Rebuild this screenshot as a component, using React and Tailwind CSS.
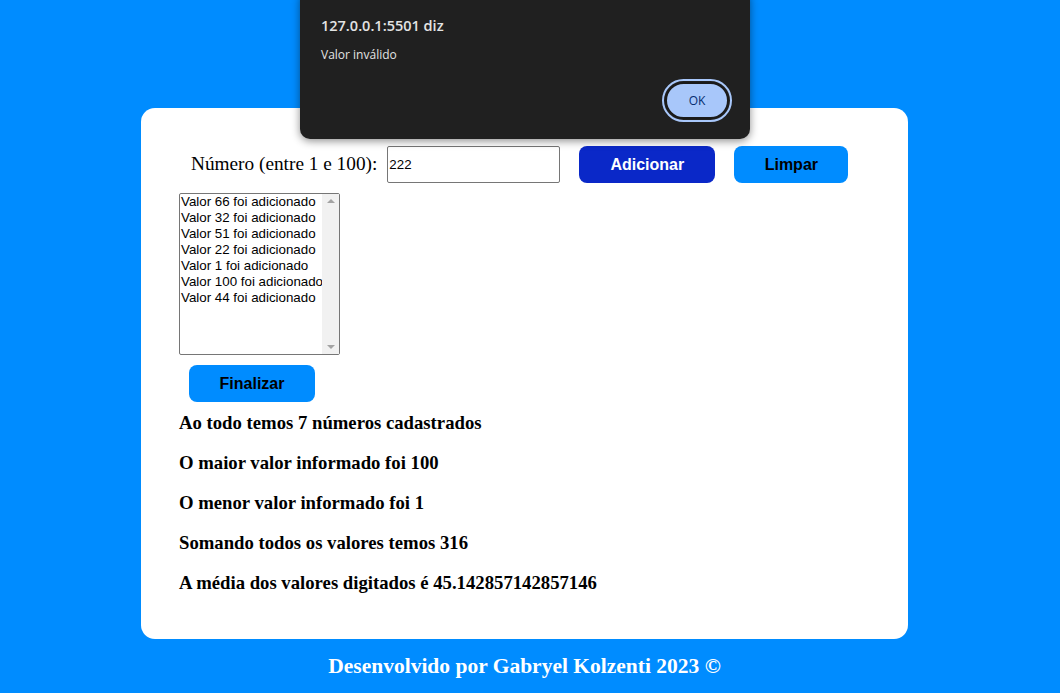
export default function App() {
  const items = [66, 32, 51, 22, 1, 100, 44];
  const sans = { fontFamily: '"Liberation Sans", Arial, sans-serif' };
  return (
    <div className="relative min-h-[693px] w-full bg-[#008cff] overflow-hidden" style={{ fontFamily: '"Liberation Serif", serif' }}>
      <div className="w-[1049px] pt-[108px] flex flex-col items-center">
        <div className="w-[767px] h-[531px] bg-white rounded-[14px] pl-[38px] pt-[38px]">
          <div className="flex items-center">
            <label className="ml-[12px] text-[19.3px] text-black">Número (entre 1 e 100):</label>
            <input
              defaultValue="222"
              className="ml-[10px] w-[173px] h-[37px] border border-[#767676] rounded-[2px] px-[1px] text-[13.33px] text-black outline-none"
              style={sans}
            />
            <button className="ml-[19px] w-[136px] h-[37px] rounded-[8px] bg-[#0a28c8] text-white font-bold text-[16px]" style={sans}>Adicionar</button>
            <button className="ml-[19px] w-[114px] h-[37px] rounded-[8px] bg-[#008cff] text-black font-bold text-[16px]" style={sans}>Limpar</button>
          </div>
          <div className="mt-[10px] w-[161px] h-[162px] border border-[#767676] rounded-[2px] flex" style={sans}>
            <div className="flex-1 pl-[1px] text-[13.33px] leading-[16px] text-black overflow-hidden">
              {items.map((v) => (
                <div key={v} className="whitespace-nowrap">Valor {v} foi adicionado</div>
              ))}
            </div>
            <div className="w-[17px] shrink-0 bg-[#f1f1f1] flex flex-col justify-between items-center py-[5px]">
              <div className="w-0 h-0 border-l-[4px] border-r-[4px] border-b-[4px] border-l-transparent border-r-transparent border-b-[#a3a3a3]" />
              <div className="w-0 h-0 border-l-[4px] border-r-[4px] border-t-[4px] border-l-transparent border-r-transparent border-t-[#a3a3a3]" />
            </div>
          </div>
          <button className="ml-[10px] mt-[10px] w-[126px] h-[37px] rounded-[8px] bg-[#008cff] text-black font-bold text-[16px]" style={sans}>Finalizar</button>
          <div className="mt-[10px] flex flex-col gap-[18px] text-[18.72px] font-bold text-black leading-[22px]">
            <p>Ao todo temos 7 números cadastrados</p>
            <p>O maior valor informado foi 100</p>
            <p>O menor valor informado foi 1</p>
            <p>Somando todos os valores temos 316</p>
            <p>A média dos valores digitados é 45.142857142857146</p>
          </div>
        </div>
        <p className="mt-[13px] text-white font-bold text-[21.5px] leading-[28px]">Desenvolvido por Gabryel Kolzenti 2023 ©</p>
      </div>

      <div
        className="absolute left-[300px] top-[-10px] w-[450px] h-[149px] bg-[#202020] rounded-[10px] shadow-[0_2px_8px_rgba(0,0,0,0.45)] pl-[21px] pt-[26px]"
        style={{ fontFamily: '"Open Sans", "Noto Sans", sans-serif' }}
      >
        <div className="text-[14.5px] font-semibold text-[#e3e3e3] leading-[20px]">127.0.0.1:5501 diz</div>
        <div className="mt-[10px] text-[12px] text-[#e3e3e3] leading-[18px]">Valor inválido</div>
        <div className="absolute right-[18px] bottom-[17px] w-[70px] h-[43px] rounded-full border-[2px] border-[#a8c7fa] flex items-center justify-center">
          <div className="w-[64px] h-[37px] rounded-full border-[2px] border-[#1a1a1a] bg-[#a8c7fa] flex items-center justify-center text-[12px] text-[#062e6f]">OK</div>
        </div>
      </div>
    </div>
  );
}
